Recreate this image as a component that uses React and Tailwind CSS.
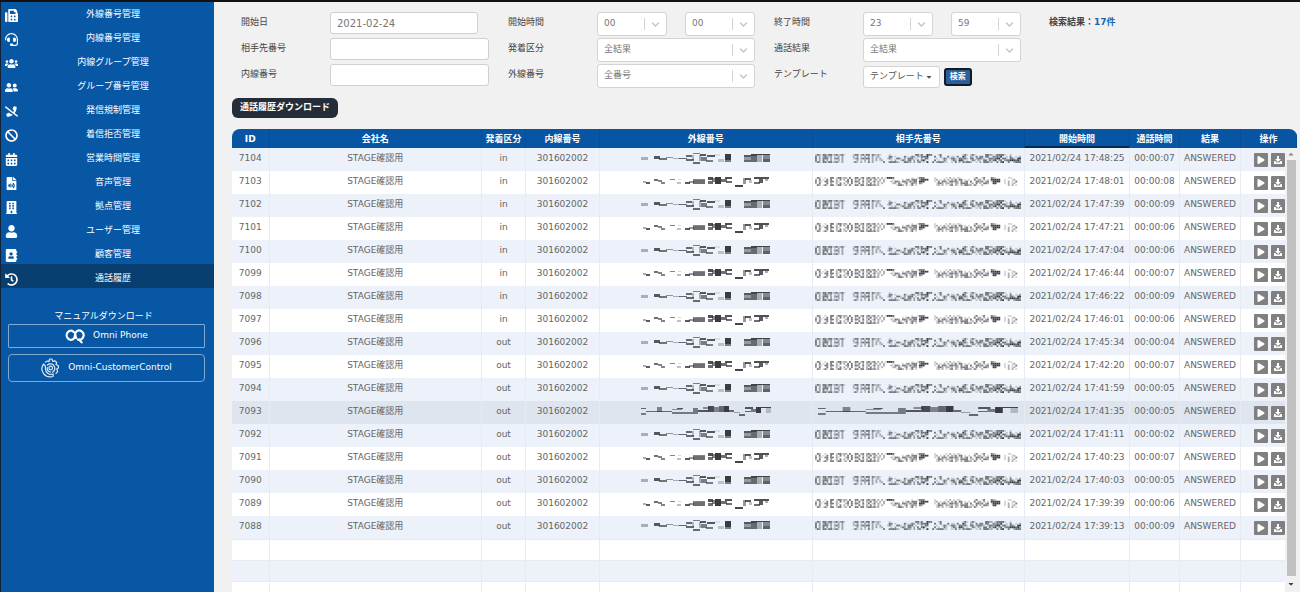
import React, { useState } from 'react';
import {
  FaFax, FaHeadset, FaUsers, FaUserFriends, FaPhoneSlash, FaBan, FaCalendarAlt,
  FaFileAudio, FaBuilding, FaUser, FaAddressBook, FaHistory, FaPlay, FaCaretDown, FaCaretUp,
} from 'react-icons/fa';

const menu = [
  { label: '外線番号管理', icon: FaFax },
  { label: '内線番号管理', icon: FaHeadset },
  { label: '内線グループ管理', icon: FaUsers },
  { label: 'グループ番号管理', icon: FaUserFriends },
  { label: '発信規制管理', icon: FaPhoneSlash },
  { label: '着信拒否管理', icon: FaBan },
  { label: '営業時間管理', icon: FaCalendarAlt },
  { label: '音声管理', icon: FaFileAudio },
  { label: '拠点管理', icon: FaBuilding },
  { label: 'ユーザー管理', icon: FaUser },
  { label: '顧客管理', icon: FaAddressBook },
  { label: '通話履歴', icon: FaHistory, active: true },
];

const calls = [
  [7104, 'in', '17:48:25', '00:00:07'],
  [7103, 'in', '17:48:01', '00:00:08'],
  [7102, 'in', '17:47:39', '00:00:09'],
  [7101, 'in', '17:47:21', '00:00:06'],
  [7100, 'in', '17:47:04', '00:00:06'],
  [7099, 'in', '17:46:44', '00:00:07'],
  [7098, 'in', '17:46:22', '00:00:09'],
  [7097, 'in', '17:46:01', '00:00:06'],
  [7096, 'out', '17:45:34', '00:00:04'],
  [7095, 'out', '17:42:20', '00:00:07'],
  [7094, 'out', '17:41:59', '00:00:05'],
  [7093, 'out', '17:41:35', '00:00:05'],
  [7092, 'out', '17:41:11', '00:00:02'],
  [7091, 'out', '17:40:23', '00:00:07'],
  [7090, 'out', '17:40:03', '00:00:05'],
  [7089, 'out', '17:39:39', '00:00:06'],
  [7088, 'out', '17:39:13', '00:00:09'],
];

// Masked values: x, y, width, height, opacity
const lineA = [
  [0, 4, 7, 3, 0.35], [13, 3, 6, 3, 0.8], [18, 5, 8, 2, 0.65], [25, 4, 7, 1, 0.5], [32, 5, 7, 1, 0.35],
  [38, 5, 8, 1, 0.7], [45, 2, 6, 2, 0.7], [45, 6, 8, 2, 0.7], [52, 0, 7, 1, 0.6], [51, 2, 2, 5, 0.3],
  [52, 9, 7, 2, 0.7], [58, 2, 2, 6, 0.35], [59, 1, 6, 2, 0.8], [60, 4, 6, 4, 0.6], [66, 2, 8, 2, 0.8],
  [65, 7, 7, 2, 0.6], [73, 1, 6, 2, 0.1], [77, 6, 6, 3, 0.25], [84, 1, 6, 6, 0.95], [84, 7, 6, 2, 0.6],
  [103, 2, 7, 2, 0.8], [103, 4, 7, 3, 0.45], [103, 7, 7, 2, 0.7], [110, 1, 6, 2, 0.9], [110, 3, 6, 6, 0.7],
  [116, 1, 13, 1, 0.9], [116, 2, 5, 7, 0.35], [122, 2, 7, 4, 0.55], [122, 6, 7, 3, 0.75],
];
const lineB = [
  [2, 5, 3, 2, 0.4], [5, 6, 4, 2, 0.8], [13, 3, 4, 2, 0.7], [17, 4, 4, 2, 0.6], [20, 6, 4, 2, 0.6],
  [29, 3, 5, 1, 0.6], [36, 6, 4, 2, 0.3], [37, 3, 3, 1, 0.2], [44, 6, 5, 2, 0.8], [48, 5, 5, 2, 0.5],
  [52, 3, 12, 1, 0.6], [52, 4, 12, 4, 0.7], [67, 1, 5, 3, 0.85], [67, 5, 5, 3, 0.7], [71, 2, 4, 4, 0.6],
  [74, 1, 6, 7, 0.95], [80, 3, 6, 3, 0.7], [84, 1, 7, 2, 0.85], [85, 5, 6, 2, 0.7], [94, 9, 8, 2, 0.9],
  [102, 2, 3, 6, 0.5], [104, 2, 6, 2, 0.8], [108, 4, 3, 3, 0.3], [113, 1, 15, 2, 0.85], [113, 6, 6, 2, 0.7],
  [118, 3, 4, 4, 0.8], [124, 3, 3, 2, 0.4],
];
const lineC = [
  [0, 2, 5, 1, 0.7], [0, 7, 5, 2, 0.6], [5, 5, 26, 1, 0.7], [16, 1, 5, 5, 0.55], [31, 3, 10, 1, 0.5],
  [31, 6, 21, 2, 0.6], [36, 2, 6, 1, 0.8], [52, 2, 5, 6, 0.6], [57, 4, 10, 2, 0.8], [62, 1, 7, 2, 0.5],
  [67, 0, 6, 6, 0.85], [73, 1, 5, 5, 0.55], [78, 0, 5, 6, 0.7], [83, 0, 5, 6, 0.95], [88, 4, 5, 2, 0.7],
  [93, 6, 6, 1, 0.4], [98, 8, 6, 2, 0.7], [104, 1, 8, 2, 0.8], [104, 5, 6, 1, 0.7], [110, 3, 5, 3, 0.6],
  [115, 1, 5, 6, 0.95], [120, 1, 10, 1, 0.9], [125, 2, 5, 5, 0.25],
];

// Fine masks, one character per 2px cell
const fineA = [
  '.+: ++.++.:+.:+.    .++ :+.++ +:.:.    .             ++.+  #++   .+           .+. .+.     ++:: .++++.  .     + ',
  '+ : :+:.: . : :     : : . : : : .:     ++ .    +. .+: :.+++#   +  +   + .. +  #:  :. + ++ ++  +:+:#  . +  . :+',
  '+ : +++ : :+: :     .:+ :+:++ : : :   .+.  ++. : +++ .  : ++    .  .+: .++. ++:+. ++ :++:. .++:+## ++. ++. ## ',
  '+ : + : : . : :       : . : : : : .:    . :  .+: ++ : + +#.    + .  +.  .+: ##: .  +: :. ++ +.+# :+ :++###+#: ',
  '.+: ++.++.:+. :     .+. : . + :     +  ++++:.  ++:: : :+ . #  + :+++..  . + : +:++:  . : +++.:  + +#  +  :+++ ',
];
const fineB = [
  ' +:  .  ++ .++.:: +  ++ :+ :+.:+ : : .###+         .  .+++     .     . : . ..       .+  .+   +:.      ..  ',
  ': + . + +  : + : + + : + : :.+ :: : :    .    . :+ +++ :####   .: . : : :.+ ++ . .  + :: : . #####  .   .: ',
  '+ :. ++ ++ :.   :+ + ++. + .+ .+ :. :   : ++: ++:.+.++ ###     . + ++: ++:+: + :+ +  ++:+ :+ .####  . : . +',
  ': +   + :  : + : : + . + : : + : : :     :: +. .+ .+:: +:       .++: ::.: :: ++++ .: + : ++:  ##    . : .: ',
  ' +: .+. ++ .++ .: +  ++ ++ :++:+.:         .++: : .+ .          .: : . :+ :. : ++:: +.  :             : : .',
];
const shade = { '.': 0.2, ':': 0.4, '+': 0.65, '#': 0.95 };

const Mask = ({ rects, stretch = 1, label }) => (
  <svg className="block mx-auto" width={130 * stretch} height="11" viewBox="0 0 130 11" preserveAspectRatio="none" fill="#2f3236" role="img" aria-label={label}>
    {rects.map(([x, y, w, h, o], i) => (
      <rect key={i} x={x} y={y} width={w} height={h} opacity={o} />
    ))}
  </svg>
);

const FineMask = ({ rows, label }) => (
  <svg className="block mx-auto" width="206" height="9" viewBox="0 0 218 10" preserveAspectRatio="none" fill="#2f3236" role="img" aria-label={label}>
    {rows.map((row, y) =>
      [...row].map((c, x) => (c === ' ' ? null : <rect key={`${x}-${y}`} x={x * 2} y={y * 2} width="2" height="2" opacity={shade[c]} />))
    )}
  </svg>
);

const Field = ({ id, label, children }) => (
  <div className="grid grid-cols-[89px_1fr] h-[26px]">
    <label htmlFor={id} className="pt-1 leading-3">{label}</label>
    <div className="flex items-start">{children}</div>
  </div>
);

const Select = ({ id, label, value, className = '' }) => (
  <div className={`relative flex-1 min-w-0 ${className}`}>
    <select
      id={id}
      aria-label={label}
      defaultValue={value}
      className="block w-full h-6 pl-1.5 pr-7 appearance-none bg-white border border-[#d4d4d4] rounded-[3px] text-[#777]"
    >
      <option>{value}</option>
    </select>
    <span className="absolute right-[22px] top-1.5 h-3 w-px bg-[#d4d4d4] pointer-events-none" />
    <svg className="absolute right-[7px] top-2 pointer-events-none" width="9" height="9" viewBox="0 0 9 9" fill="none" stroke="#c4c4c4" strokeWidth="1.4" strokeLinecap="round">
      <path d="M1.5 3 4.5 6 7.5 3" />
    </svg>
  </div>
);

const heads = ['ID', '会社名', '発着区分', '内線番号', '外線番号', '相手先番号', '開始時間', '通話時間', '結果', '操作'];

const Sidebar = () => (
  <aside className="w-[214px] shrink-0 bg-[#0757a5] border-l border-[#10233a] text-white">
    <nav>
      {menu.map(({ label, icon: Icon, active }) => (
        <a key={label} href="#" className={`flex items-center h-6 pl-1 pt-1.5 ${active ? 'bg-[#083e70]' : ''}`}>
          <Icon size={13} className="shrink-0" />
          <span className="flex-1 text-center pr-1.5">{label}</span>
        </a>
      ))}
    </nav>
    <div className="mt-5 pl-[7px] pr-[9px] text-center">
      <p className="leading-4 pr-1.5">マニュアルダウンロード</p>
      <a href="#" className="flex items-center justify-center gap-2 h-6 border border-[#7fa8d2] rounded-[1px]">
        <svg width="20" height="15" viewBox="0 0 20 15" fill="none" stroke="#fff" strokeWidth="2.2" strokeLinecap="round">
          <path d="M9 3.200A4.200 4.600 0 1 0 9 9.400C10.400 8 9.400 4.600 11 3A4.400 4.600 0 1 1 13 10.600M11.200 9C10.600 8 10.400 6.600 10.200 5M14 10.400l2.600 3" />
        </svg>
        <span>Omni Phone</span>
      </a>
      <a href="#" className="flex items-center justify-center gap-2 h-7 mt-1.5 border border-[#7fa8d2] rounded-sm">
        <svg width="19" height="20" viewBox="0 0 19 20" fill="none" stroke="#dbe9f7" strokeWidth="1.2" strokeLinecap="round" strokeLinejoin="round">
          <path d="M4.500 4 6.500 3l1.500.6L8.600 1h2.300l.8 2.400 2.300-.6 1.700 1.700-.7 2 2.400 1.200v2.400l-1.700 1 1 2.200-1.700 2" />
          <path d="M2.500 6C.3 9 .6 13 2.800 15.800S8 19.500 12 18.500l.3-2.500c-4 1.200-7.800-1-7.800-5.500L4.300 8z" />
          <path d="M6.500 7C8 5.300 12 5.500 13.300 8.200S13.200 13 11.500 14.200M6.300 9.500C5.800 12 7.500 14 9.500 14" />
          <circle cx="9.700" cy="10" r="1.800" />
        </svg>
        <span>Omni-CustomerControl</span>
      </a>
    </div>
  </aside>
);

const App = () => {
  const [date, setDate] = useState('2021-02-24');

  return (
    <div className="relative flex h-screen overflow-hidden bg-[#f1f1f1] text-[9px] text-[#444] font-['DejaVu_Sans','Noto_Sans_CJK_JP',sans-serif]">
      <div className="absolute inset-x-0 top-0 h-0.5 bg-[#111]" />
      <Sidebar />

      <main className="flex-1 min-w-0 flex flex-col pl-[18px] pr-[3px] pt-3">
        {/* Search form */}
        <form className="grid grid-cols-[267fr_266fr_275fr_248fr] pl-[9px] h-[78px]" onSubmit={(e) => e.preventDefault()}>
          <div className="pr-[19px]">
            <Field id="date" label="開始日">
              <input id="date" value={date} onChange={(e) => setDate(e.target.value)} className="w-full mr-[11px] h-[22px] px-1.5 bg-white border border-[#d0d0d0] rounded-[3px] text-[10px] text-[#777]" />
            </Field>
            <Field id="partner" label="相手先番号">
              <input id="partner" className="w-full h-[22px] px-1.5 bg-white border border-[#d0d0d0] rounded-[3px]" />
            </Field>
            <Field id="ext" label="内線番号">
              <input id="ext" className="w-full h-[22px] px-1.5 bg-white border border-[#d0d0d0] rounded-[3px]" />
            </Field>
          </div>
          <div className="pr-[19px]">
            <Field id="startHour" label="開始時間">
              <Select id="startHour" value="00" className="mr-[18px]" />
              <Select id="startMin" label="開始分" value="00" />
            </Field>
            <Field id="direction" label="発着区分">
              <Select id="direction" value="全結果" />
            </Field>
            <Field id="line" label="外線番号">
              <Select id="line" value="全番号" />
            </Field>
          </div>
          <div className="pr-7">
            <Field id="endHour" label="終了時間">
              <Select id="endHour" value="23" className="mr-[18px]" />
              <Select id="endMin" label="終了分" value="59" />
            </Field>
            <Field id="result" label="通話結果">
              <Select id="result" value="全結果" />
            </Field>
            <Field id="template" label="テンプレート">
              <button id="template" type="button" className="flex items-center gap-px h-[22px] mt-0.5 px-1.5 bg-white border border-[#d4d4d4] rounded-[3px] text-[#555] whitespace-nowrap">
                テンプレート<FaCaretDown size={8} />
              </button>
              <button type="submit" className="h-[18px] mt-1 ml-1 px-1 bg-[#2a6099] border-2 border-[#111a26] rounded-[3px] text-[8px] leading-3 font-bold text-white whitespace-nowrap">検索</button>
            </Field>
          </div>
          <p className="pt-1 leading-3 font-bold">
            検索結果：<span className="text-[#1a66b3]">17件</span>
          </p>
        </form>

        <button type="button" className="self-start h-5 mt-2 mb-[11px] px-2 bg-[#252d38] rounded-md font-bold text-white">
          通話履歴ダウンロード
        </button>

        {/* Call history */}
        <div className="relative flex-1 min-h-0 overflow-hidden rounded-t-lg">
          <table className="w-full table-fixed border-collapse text-center text-[#666]">
            <colgroup>
              <col className="w-[37px]" />
              <col />
              <col className="w-11" />
              <col className="w-[74px]" />
              <col />
              <col />
              <col className="w-[105px]" />
              <col className="w-[50px]" />
              <col className="w-[61px]" />
              <col className="w-14" />
            </colgroup>
            <thead>
              <tr className="h-[19px] bg-[#0755a3] text-white">
                {heads.map((h) => (
                  <th key={h} className={`p-0 leading-3 whitespace-nowrap border-r border-[#064d95] ${h === '開始時間' ? 'shadow-[inset_0_-2px_0_#06294f]' : ''}`}>{h}</th>
                ))}
              </tr>
            </thead>
            <tbody className="[&_td]:p-0 [&_td]:pb-[3px] [&_td]:border-r [&_td]:border-[#e6eaf1] [&_td]:leading-3 [&_td]:whitespace-nowrap">
              {calls.map(([id, dir, time, length], i) => {
                const held = id === 7093;
                const odd = i % 2 === 1;
                return (
                  <tr key={id} className={`h-[23px] ${held ? 'bg-[#dfe5ee]' : odd ? 'bg-white' : 'bg-[#ecf1fa]'}`}>
                    <td>{id}</td>
                    <td>STAGE確認用</td>
                    <td>{dir}</td>
                    <td>301602002</td>
                    <td><Mask rects={held ? lineC : odd ? lineB : lineA} label="外線番号" /></td>
                    <td>
                      {held ? <Mask rects={lineC} stretch={1.54} label="相手先番号" /> : <FineMask rows={odd ? fineB : fineA} label="相手先番号" />}
                    </td>
                    <td>2021/02/24 {time}</td>
                    <td>{length}</td>
                    <td>ANSWERED</td>
                    <td>
                      <div className="flex gap-[3px] pl-[13px] pt-1">
                        <button type="button" aria-label="再生" className="flex items-center justify-center size-3.5 bg-[#808080] rounded-[1px] text-white">
                          <FaPlay size={8} />
                        </button>
                        <button type="button" aria-label="ダウンロード" className="flex items-center justify-center size-3.5 bg-[#808080] rounded-[1px] text-white">
                          <svg width="10" height="10" viewBox="0 0 10 10" fill="currentColor">
                            <path d="M4 1h2v3h2L5 7 2 4h2zM1 6h1.500l1 1.500h3l1-1.500H9v3H1z" />
                          </svg>
                        </button>
                      </div>
                    </td>
                  </tr>
                );
              })}
              {['bg-white', 'bg-[#ecf1fa]', 'bg-white'].map((bg, i) => (
                <tr key={i} className={`h-[21px] border-t border-[#e8ebef] ${bg}`}>
                  {heads.map((h) => <td key={h} />)}
                </tr>
              ))}
            </tbody>
          </table>

          {/* Scrollbar */}
          <div className="absolute right-0 top-[19px] bottom-0 w-3 flex flex-col items-center bg-[#f1f1f1] text-[#888]">
            <FaCaretUp size={8} className="my-0.5 shrink-0" />
            <div className="flex-1 w-[9px] bg-[#c1c1c1]" />
            <FaCaretDown size={8} className="my-1 shrink-0 text-[#444]" />
          </div>
        </div>
      </main>
    </div>
  );
};

export default App;
